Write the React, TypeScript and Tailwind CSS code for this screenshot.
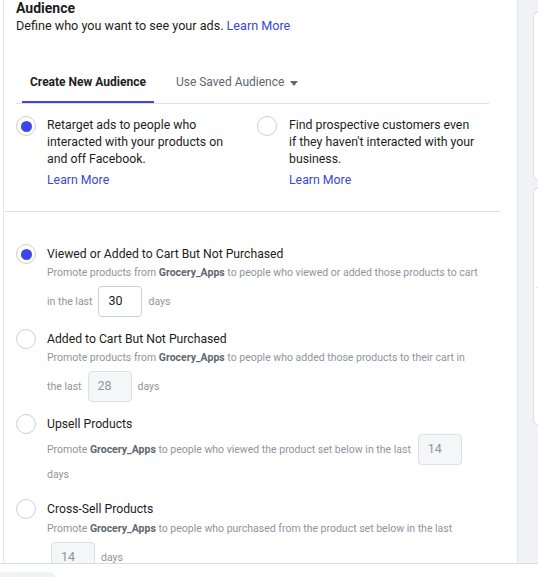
import React from "react";

const Radio = ({ checked }: { checked?: boolean }) => (
  <div className="w-[20px] h-[20px] shrink-0 rounded-full border border-[#ccd0d5] bg-white flex items-center justify-center">
    {checked && <div className="w-[11px] h-[11px] rounded-full bg-[#3b48e6]" />}
  </div>
);

const Box = ({ value, disabled }: { value: string; disabled?: boolean }) => (
  <div
    className={
      disabled
        ? "w-[44px] h-[31px] shrink-0 rounded-[4px] border border-[#dddfe2] bg-[#f5f6f7] flex items-center pl-[9px] text-[12.5px] text-[#8d949e]"
        : "w-[44px] h-[31px] shrink-0 rounded-[4px] border border-[#ccd0d5] bg-white flex items-center pl-[9px] text-[12.5px] text-[#1c1e21]"
    }
  >
    {value}
  </div>
);

const B = ({ children }: { children: React.ReactNode }) => (
  <span className="font-bold text-[#606770]">{children}</span>
);

export default function App() {
  return (
    <div className="w-[538px] h-[577px] overflow-hidden bg-white font-['Roboto',sans-serif] flex flex-col">
      <div className="flex h-[564px] shrink-0 border-b border-[#dadde1]">
        <main className="ml-[3px] w-[515px] shrink-0 border-l border-r border-[#e4e6eb] bg-white overflow-hidden">
          <div className="pl-[12px]">
            <div className="mt-[-2px] text-[14px] leading-[20px] font-bold text-[#1c1e21]">Audience</div>
            <div className="mt-[-1px] text-[12.6px] leading-[17px] text-[#1c1e21]">
              Define who you want to see your ads. <span className="text-[#3848d8]">Learn More</span>
            </div>

            <div className="mt-[40px] w-[473px] flex border-b border-[#dddfe2]">
              <div className="ml-[6px] px-[8px] pb-[10px] border-b-2 border-[#3b48e6] text-[12px] leading-[17px] font-bold text-[#1c1e21]">
                Create New Audience
              </div>
              <div className="ml-[14px] px-[8px] pb-[12px] flex items-start gap-[6px] text-[12px] leading-[17px] text-[#606770]">
                Use Saved Audience
                <svg width="8" height="5" viewBox="0 0 8 5" className="mt-[7px]">
                  <path d="M0 0 L8 0 L4 5 Z" fill="#606770" />
                </svg>
              </div>
            </div>

            <div className="mt-[12px] flex">
              <div className="w-[241px] flex gap-[11px]">
                <Radio checked />
                <div className="mt-[1px] text-[12.3px] leading-[17px] text-[#1c1e21]">
                  Retarget ads to people who
                  <br />
                  interacted with your products on
                  <br />
                  and off Facebook.
                  <div className="mt-[4px] text-[#3848d8]">Learn More</div>
                </div>
              </div>
              <div className="flex gap-[12px]">
                <Radio />
                <div className="mt-[1px] text-[12.3px] leading-[17px] text-[#1c1e21]">
                  Find prospective customers even
                  <br />
                  if they haven't interacted with your
                  <br />
                  business.
                  <div className="mt-[4px] text-[#3848d8]">Learn More</div>
                </div>
              </div>
            </div>
          </div>

          <div className="mt-[22px] ml-[1px] w-[495px] h-px bg-[#dddfe2]" />

          <div className="pl-[12px] pt-[32px] flex flex-col">
            {/* Option 1 */}
            <div className="flex gap-[11px]">
              <Radio checked />
              <div className="flex flex-col">
                <div className="text-[12.2px] leading-[20px] text-[#1c1e21]">Viewed or Added to Cart But Not Purchased</div>
                <div className="text-[10.5px] leading-[18px] text-[#90949c]">
                  Promote products from <B>Grocery_Apps</B> to people who viewed or added those products to cart
                </div>
                <div className="mt-[4px] h-[31px] flex items-center text-[10.5px] text-[#90949c]">
                  <span>in the last</span>
                  <div className="ml-[6px]">
                    <Box value="30" />
                  </div>
                  <span className="ml-[6px]">days</span>
                </div>
              </div>
            </div>

            {/* Option 2 */}
            <div className="mt-[12px] flex gap-[11px]">
              <Radio />
              <div className="flex flex-col">
                <div className="text-[12.2px] leading-[20px] text-[#1c1e21]">Added to Cart But Not Purchased</div>
                <div className="text-[10.5px] leading-[18px] text-[#90949c]">
                  Promote products from <B>Grocery_Apps</B> to people who added those products to their cart in
                </div>
                <div className="mt-[4px] h-[31px] flex items-center text-[10.5px] text-[#90949c]">
                  <span>the last</span>
                  <div className="ml-[6px]">
                    <Box value="28" disabled />
                  </div>
                  <span className="ml-[6px]">days</span>
                </div>
              </div>
            </div>

            {/* Option 3 */}
            <div className="mt-[12px] flex gap-[11px]">
              <Radio />
              <div className="flex flex-col">
                <div className="text-[12.2px] leading-[20px] text-[#1c1e21]">Upsell Products</div>
                <div className="h-[31px] flex items-center text-[10.5px] text-[#90949c]">
                  <span>
                    Promote <B>Grocery_Apps</B> to people who viewed the product set below in the last
                  </span>
                  <div className="ml-[7px]">
                    <Box value="14" disabled />
                  </div>
                </div>
                <div className="mt-[1px] text-[10.5px] leading-[18px] text-[#90949c]">days</div>
              </div>
            </div>

            {/* Option 4 */}
            <div className="mt-[15px] flex gap-[11px]">
              <Radio />
              <div className="flex flex-col">
                <div className="text-[12.2px] leading-[20px] text-[#1c1e21]">Cross-Sell Products</div>
                <div className="mt-[1px] text-[10.5px] leading-[18px] text-[#90949c]">
                  Promote <B>Grocery_Apps</B> to people who purchased from the product set below in the last
                </div>
                <div className="mt-[4px] h-[31px] flex items-center text-[10.5px] text-[#90949c]">
                  <div className="ml-[4px]">
                    <Box value="14" disabled />
                  </div>
                  <span className="ml-[6px]">days</span>
                </div>
              </div>
            </div>
          </div>
        </main>

        <aside className="flex-1 bg-[#f0f2f5] flex flex-col pt-[12px]">
          <div className="ml-[15px] h-[168px] rounded-l-[8px] border border-r-0 border-[#dddfe2] bg-white" />
          <div className="ml-[15px] mt-[8px] h-[237px] rounded-l-[8px] border border-r-0 border-[#dddfe2] bg-white flex flex-col">
            <div className="mt-[98px] ml-[2px] h-px bg-[#e4e6eb]" />
          </div>
        </aside>
      </div>
      <div className="flex-1 pt-[8px]">
        <div className="w-[55px] h-full rounded-tr-[6px] rounded-tl-[2px] bg-[#f0f2f5]" />
      </div>
    </div>
  );
}
